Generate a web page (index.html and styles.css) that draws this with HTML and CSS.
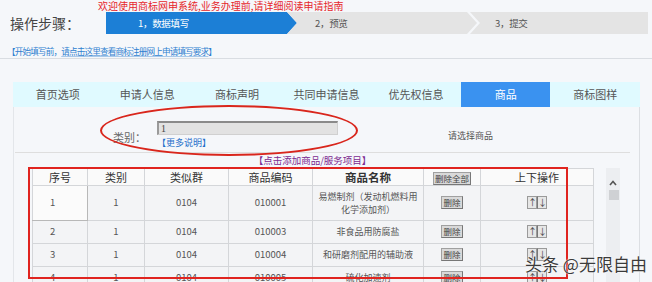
FILE: index.html
```html
<!DOCTYPE html>
<html lang="zh-CN">
<head>
<meta charset="utf-8">
<title>商标网上申请</title>
<link rel="stylesheet" href="styles.css">
</head>
<body>
<header class="head">
  <div class="head-row">
    <div class="head-label">操作步骤：</div>
    <div class="head-main">
      <div class="banner">欢迎使用商标网申系统,业务办理前,请详细阅读申请指南</div>
      <div class="steps">
        <div class="step step-1">1，数据填写</div>
        <div class="step step-2">2，预览</div>
        <div class="step step-3">3，提交</div>
      </div>
    </div>
  </div>
  <div class="notice">【开始填写前，<span class="notice-link">请点击这里查看商标注册网上申请填写要求</span>】</div>
</header>

<main class="form">
  <nav class="tabs">
    <div class="tab">首页选项</div>
    <div class="tab">申请人信息</div>
    <div class="tab">商标声明</div>
    <div class="tab">共同申请信息</div>
    <div class="tab">优先权信息</div>
    <div class="tab is-active">商品</div>
    <div class="tab">商标图样</div>
  </nav>

  <section class="panel">
    <div class="cat-row">
      <div class="cat-label">类别：</div>
      <div class="cat-field">
        <div class="cat-input">1</div>
        <div class="more">【更多说明】</div>
      </div>
      <div class="cat-hint">请选择商品</div>
    </div>
    <div class="divider"></div>

    <div class="goods-area">
      <div class="add-link">【点击添加商品/服务项目】</div>
      <div class="goods-row">
        <table class="goods">
          <colgroup>
            <col class="c-no"><col class="c-cls"><col class="c-grp"><col class="c-code"><col class="c-name"><col class="c-del"><col class="c-ord">
          </colgroup>
          <thead>
            <tr class="r-head">
              <th>序号</th>
              <th>类别</th>
              <th>类似群</th>
              <th>商品编码</th>
              <th class="th-name">商品名称</th>
              <th><span class="btn btn-wide">删除全部</span></th>
              <th>上下操作</th>
            </tr>
          </thead>
          <tbody>
            <tr class="r-tall">
              <td class="td-no is-lit">1</td><td>1</td><td>0104</td><td>010001</td>
              <td class="td-name">易燃制剂（发动机燃料用<br>化学添加剂）</td>
              <td><span class="btn">删除</span></td>
              <td><span class="updown"><span class="ud">↑</span><span class="ud">↓</span></span></td>
            </tr>
            <tr class="r">
              <td class="td-no">2</td><td>1</td><td>0104</td><td>010003</td>
              <td class="td-name">非食品用防腐盐</td>
              <td><span class="btn">删除</span></td>
              <td><span class="updown"><span class="ud">↑</span><span class="ud">↓</span></span></td>
            </tr>
            <tr class="r">
              <td class="td-no">3</td><td>1</td><td>0104</td><td>010004</td>
              <td class="td-name">和研磨剂配用的辅助液</td>
              <td><span class="btn">删除</span></td>
              <td><span class="updown"><span class="ud">↑</span><span class="ud">↓</span></span></td>
            </tr>
            <tr class="r">
              <td class="td-no">4</td><td>1</td><td>0104</td><td>010005</td>
              <td class="td-name">硫化加速剂</td>
              <td><span class="btn">删除</span></td>
              <td><span class="updown"><span class="ud">↑</span><span class="ud">↓</span></span></td>
            </tr>
          </tbody>
        </table>
        <div class="scrollbar">
          <svg class="sb-arrow" width="8" height="6" viewBox="0 0 8 6"><polyline points="1,5 4,1.5 7,5" fill="none" stroke="#555" stroke-width="1.6"/></svg>
          <span class="sb-thumb"></span>
        </div>
      </div>
    </div>
  </section>
</main>

<div class="mark mark-ellipse"></div>
<div class="mark mark-rect"></div>
<div class="watermark">头条 @无限自由</div>
</body>
</html>
```

FILE: styles.css
```css
* { box-sizing: border-box; }

html, body {
  margin: 0;
  padding: 0;
}

body {
  position: relative;
  width: 652px;
  height: 282px;
  overflow: hidden;
  background: #f5f7fa;
  font-family: "Noto Sans CJK SC", "Noto Sans", sans-serif;
  color: #555;
}

/* ---------- header ---------- */
.head {
  border-bottom: 1px solid #d9dde2;
}

.head-row {
  display: flex;
  align-items: flex-end;
}

.head-label {
  width: 98px;
  padding-left: 10px;
  height: 22px;
  line-height: 22px;
  font-size: 14px;
  color: #444;
  white-space: nowrap;
}

.head-main {
  flex: 1;
}

.banner {
  height: 12px;
  line-height: 12px;
  font-size: 10px;
  color: #e6262b;
  white-space: nowrap;
}

.steps {
  display: flex;
  height: 22px;
  margin-left: 8px;
}

.step {
  height: 22px;
  line-height: 22px;
  font-size: 9.5px;
  letter-spacing: -0.3px;
  color: #555;
  background: #e4e4e4;
  white-space: nowrap;
}

.step-1 {
  width: 191px;
  padding-left: 32px;
  background: #1c7fd6;
  color: #fff;
  clip-path: polygon(0 0, calc(100% - 10px) 0, 100% 50%, calc(100% - 10px) 100%, 0 100%);
}

.step-2 {
  width: 190px;
  margin-left: -10px;
  padding-left: 28px;
  clip-path: polygon(0 0, calc(100% - 10px) 0, 100% 50%, calc(100% - 10px) 100%, 0 100%, 10px 50%);
}

.step-3 {
  width: 178px;
  margin-left: -7px;
  padding-left: 25px;
  clip-path: polygon(0 0, 100% 0, 100% 100%, 0 100%, 10px 50%);
}

.notice {
  margin-top: 11px;
  height: 13px;
  line-height: 13px;
  padding-left: 7px;
  font-size: 8.6px;
  letter-spacing: -0.85px;
  color: #2f7fd0;
  white-space: nowrap;
}

.notice-link {
  text-decoration: underline;
  text-decoration-color: #a9c9ea;
}

/* ---------- form ---------- */
.form {
  margin: 23px 12px 0 13px;
}

.tabs {
  display: flex;
  height: 25px;
  background: #e0faff;
}

.tab {
  flex: 1;
  text-align: center;
  line-height: 25px;
  font-size: 11px;
  color: #555;
  white-space: nowrap;
}

.tab.is-active {
  background: #3a92f0;
  color: #fff;
}

.panel {
  height: 175px;
  border-left: 1px solid #e3e6ea;
  border-right: 1px solid #dcdfe3;
}

.cat-row {
  display: flex;
  align-items: center;
  padding: 14px 0 0 99px;
}

.cat-label {
  width: 44px;
  margin-top: 3px;
  font-size: 11px;
  line-height: 14px;
  color: #666;
}

.cat-input {
  width: 181px;
  height: 14px;
  padding-left: 2px;
  background: #e2e2e2;
  border-top: 2px solid #8a8a8a;
  border-left: 2px solid #9a9a9a;
  border-right: 1px solid #d0d0d0;
  border-bottom: 1px solid #d0d0d0;
  font-family: "Liberation Serif", serif;
  font-size: 10px;
  line-height: 11px;
  color: #444;
}

.more {
  margin-top: 2px;
  line-height: 12px;
  font-size: 9px;
  color: #1f6fca;
  white-space: nowrap;
}

.cat-hint {
  margin-left: 110px;
  font-size: 9px;
  color: #555;
  white-space: nowrap;
}

.divider {
  height: 1px;
  margin: 3px 9px 0 1px;
  background: #dedede;
}

.goods-area {
  margin-left: 18px;
}

.add-link {
  width: 561px;
  height: 15px;
  line-height: 15px;
  text-align: center;
  font-size: 9.5px;
  color: #7c2a90;
  white-space: nowrap;
}

.goods-row {
  display: flex;
  align-items: stretch;
  gap: 12px;
  height: 120px;
}

/* ---------- table ---------- */
.goods {
  width: 561px;
  table-layout: fixed;
  border-collapse: collapse;
  align-self: flex-start;
}

.c-no { width: 55px; }
.c-cls { width: 57px; }
.c-grp { width: 84px; }
.c-code { width: 84px; }
.c-name { width: 111px; }
.c-del { width: 57px; }
.c-ord { width: 113px; }

.goods th,
.goods td {
  border: 1px solid #d4d6d9;
  padding: 0 3px;
  text-align: center;
  vertical-align: middle;
  white-space: nowrap;
}

.goods th {
  background: #fafafa;
  font-size: 11px;
  font-weight: normal;
  color: #333;
  line-height: 14px;
}

.goods th.th-name {
  font-size: 11.5px;
  font-weight: bold;
}

.goods td {
  background: #f3f4f6;
  font-size: 9.5px;
  line-height: 13px;
  color: #555;
}

.goods td.td-no {
  text-align: left;
  padding-left: 17px;
}

.goods td.is-lit {
  background: #fbfbfb;
  border-right-color: #b8b8b8;
  border-bottom-color: #b8b8b8;
}

.goods td.td-name {
  font-size: 9px;
  white-space: normal;
}

.r-head { height: 16px; }
.r-tall { height: 35px; }
.r { height: 23px; }

.btn {
  display: inline-block;
  height: 13px;
  padding: 0 1px;
  line-height: 11px;
  font-size: 8.5px;
  color: #444;
  background: #d9d9d9;
  border: 1px solid #a0a0a0;
  border-right-color: #777;
  border-bottom-color: #777;
  vertical-align: middle;
}

.btn-wide {
  padding: 0 1px;
}

.updown {
  display: inline-flex;
  vertical-align: middle;
}

.ud {
  display: inline-block;
  width: 10px;
  height: 13px;
  line-height: 11px;
  font-size: 9px;
  color: #444;
  background: #e6e6e6;
  border: 1px solid #9a9a9a;
  text-align: center;
}

.ud + .ud {
  border-left-color: #777;
}

/* ---------- scrollbar ---------- */
.scrollbar {
  width: 14px;
  display: flex;
  flex-direction: column;
  align-items: center;
  background: #eceef1;
  padding-top: 12px;
}

.sb-arrow {
  display: block;
}

.sb-thumb {
  display: block;
  width: 10px;
  height: 10px;
  margin-top: 4px;
  margin-left: 2px;
  background: #cfd1d4;
}

/* ---------- annotations ---------- */
.mark {
  position: absolute;
  pointer-events: none;
}

.mark-ellipse {
  left: 100px;
  top: 105px;
  width: 258px;
  height: 51px;
  border: 2px solid #d9261c;
  border-radius: 50%;
}

.mark-rect {
  left: 28px;
  top: 167px;
  width: 540px;
  height: 112px;
  border: 2px solid #e0241f;
}

.watermark {
  position: absolute;
  left: 525px;
  top: 253px;
  font-size: 17px;
  line-height: 22px;
  color: #3b3b3b;
  white-space: nowrap;
  text-shadow: 0 0 2px #fff, 0 0 1px #fff;
}
```
